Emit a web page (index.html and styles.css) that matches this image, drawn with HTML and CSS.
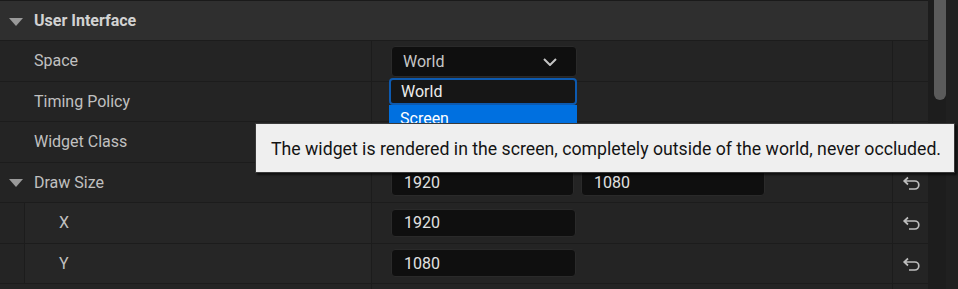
FILE: index.html
```html
<!DOCTYPE html>
<html lang="en">
<head>
	<meta charset="UTF-8">
	<title>Details</title>
	<link rel="stylesheet" href="styles.css">
</head>
<body>
	<div class="editor">
		<div class="panel">
			<div class="row header">
				<div class="name"><span class="caret"></span>User Interface</div>
			</div>
			<div class="row">
				<div class="name">Space</div>
				<div class="value">
					<div class="combo">World
						<svg class="chev" width="14" height="8" viewBox="0 0 14 8"><path d="M1 1 L7 7 L13 1" fill="none" stroke="#c4c4c4" stroke-width="2"/></svg>
					</div>
				</div>
				<div class="reset"></div>
			</div>
			<div class="row">
				<div class="name">Timing Policy</div>
				<div class="value"></div>
				<div class="reset"></div>
			</div>
			<div class="row">
				<div class="name">Widget Class</div>
				<div class="value"></div>
				<div class="reset"></div>
			</div>
			<div class="row">
				<div class="name"><span class="caret"></span>Draw Size</div>
				<div class="value pair">
					<div class="field">1920</div>
					<div class="field">1080</div>
				</div>
				<div class="reset">
					<svg width="19" height="14" viewBox="0 0 19 14"><path d="M6 1.5 L2.2 5 L6 8.5 M2.2 5 H12.8 A4 4 0 0 1 12.8 13 H7" fill="none" stroke="#bdbdbd" stroke-width="1.7"/></svg>
				</div>
			</div>
			<div class="row child">
				<div class="name"><span class="indent"></span>X</div>
				<div class="value"><div class="field">1920</div></div>
				<div class="reset">
					<svg width="19" height="14" viewBox="0 0 19 14"><path d="M6 1.5 L2.2 5 L6 8.5 M2.2 5 H12.8 A4 4 0 0 1 12.8 13 H7" fill="none" stroke="#bdbdbd" stroke-width="1.7"/></svg>
				</div>
			</div>
			<div class="row child">
				<div class="name"><span class="indent"></span>Y</div>
				<div class="value"><div class="field">1080</div></div>
				<div class="reset">
					<svg width="19" height="14" viewBox="0 0 19 14"><path d="M6 1.5 L2.2 5 L6 8.5 M2.2 5 H12.8 A4 4 0 0 1 12.8 13 H7" fill="none" stroke="#bdbdbd" stroke-width="1.7"/></svg>
				</div>
			</div>
			<div class="row">
				<div class="name"></div>
				<div class="value"></div>
				<div class="reset"></div>
			</div>
		</div>
		<div class="scroll"><div class="thumb"></div></div>

		<div class="list">
			<div class="item current">World</div>
			<div class="item picked">Screen</div>
		</div>

		<div class="tooltip">The widget is rendered in the screen, completely outside of the world, never occluded.</div>
	</div>
</body>
</html>
```

FILE: styles.css
```css
* { box-sizing: border-box; }
body { margin: 0; background: #1b1b1b; font-family: Roboto, "Liberation Sans", sans-serif; overflow: hidden; }

.editor { position: relative; display: flex; width: 958px; height: 289px; overflow: hidden; }
.panel { width: 928px; background: #1b1b1b; border-top: 1px solid #1a1a1a; }

.row { display: grid; grid-template-columns: 372px 521px 35px; height: 40.5px; border-bottom: 1px solid #1c1c1c; background: #1c1c1c; }
.row > div { background: #242424; }
.row .name { display: flex; align-items: center; padding-left: 34px; font-size: 16px; color: #c0c0c0; border-right: 1px solid #1c1c1c; position: relative; }
.row .value { display: flex; align-items: center; gap: 7px; padding-left: 19px; border-right: 1px solid #1c1c1c; }
.row .reset { display: flex; align-items: center; justify-content: center; padding-top: 1px; padding-left: 1px; }

.header { display: block; height: 40px; }
.header .name { height: 39px; background: #2f2f2f; border-right: none; font-weight: bold; color: #d2d2d2; }

.caret { position: absolute; left: 9px; top: 50%; margin-top: -3px; width: 0; height: 0; border-left: 7px solid transparent; border-right: 7px solid transparent; border-top: 8px solid #9a9a9a; }

.child .name { padding-left: 59px; background: #262626; }
.indent { position: absolute; left: 0; top: 0; bottom: 0; width: 25px; background: #242424; border-right: 1px solid #1c1c1c; }

.combo { position: relative; width: 186px; height: 31px; margin-top: 1px; background: #0f0f0f; border: 1px solid #2a2a2a; border-radius: 4px; padding-left: 11px; display: flex; align-items: center; font-size: 16px; color: #c6c6c6; }
.chev { position: absolute; right: 19px; top: 11px; }

.field { width: 185px; height: 28px; background: #0f0f0f; border: 1px solid #2a2a2a; border-radius: 4px; padding-left: 12px; display: flex; align-items: center; font-size: 16px; color: #e2e2e2; }
.pair { gap: 6px; }
.pair .field { width: 183px; }
.pair .field + .field { width: 184px; }

.scroll { width: 30px; background: #1d1d1d; border-right: 12px solid #202020; padding-left: 6px; }
.thumb { width: 12px; height: 100px; background: #5b5b5b; border-radius: 0 0 6px 6px; }

.list { position: absolute; left: 389px; top: 78px; width: 188px; }
.item { height: 27px; padding-left: 11px; display: flex; align-items: center; font-size: 16px; }
.item.current { background: #161616; border: 2px solid #0d5ab0; border-radius: 4px; color: #ececec; padding-left: 10px; }
.item.picked { height: 26px; background: #0070e0; color: #ffffff; }

.tooltip { position: absolute; left: 255px; top: 123px; width: 700px; height: 50px; background: #efefef; border: 1px solid #3a3a3a; box-shadow: 2px 2px 2px rgba(0, 0, 0, 0.6); padding-left: 15px; padding-top: 1px; display: flex; align-items: center; font-size: 17.7px; color: #141414; }
```
